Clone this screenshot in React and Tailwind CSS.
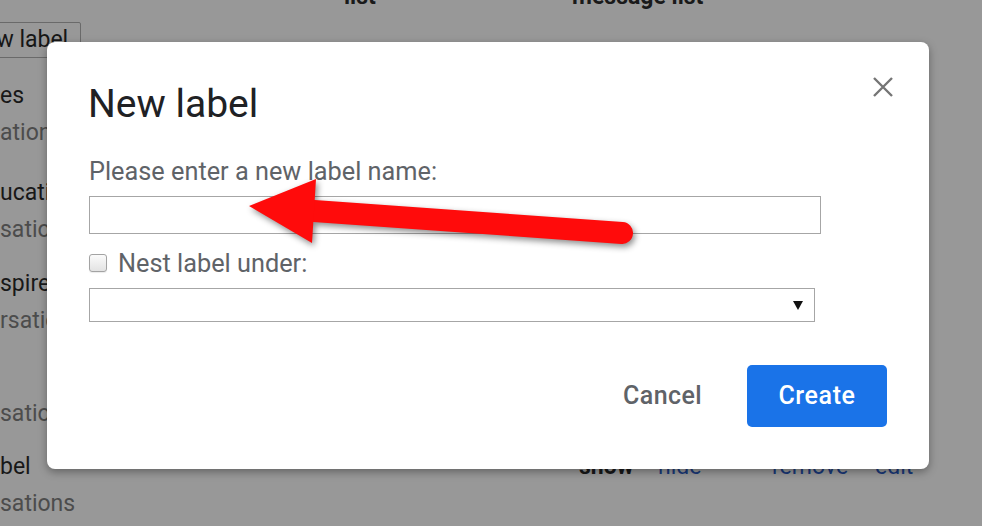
import React from 'react';

const rows = [
    { name: 'es', count: 'ations', gap: 'mt-[19px]' },
    { name: 'ucation', count: 'sations', gap: 'mt-[23px]' },
    { name: 'spire', count: 'rsations', gap: 'mt-[17px]' },
    { name: '', count: 'sations', gap: 'mt-[19px]' },
    { name: 'bel', count: 'sations', gap: 'mt-[16px]', actions: true },
];

const NewLabelDialog = () => (
    <div className="absolute left-[47px] top-[42px] w-[882px] h-[427px] bg-white rounded-[8px] shadow-[0_3px_9px_rgba(0,0,0,0.35)] pl-[42px] pr-[42px] pt-[43px] pb-[42px] flex flex-col">
        {/* Close */}
        <button className="absolute right-[36px] top-[35px] w-[20px] h-[20px]">
            <svg width="20" height="20" viewBox="0 0 20 20">
                <path d="M1 1 L19 19 M19 1 L1 19" stroke="#757575" strokeWidth="2.4" fill="none" />
            </svg>
        </button>

        <h2 className="text-[39px] leading-[38px] h-[38px] text-[#202124] -ml-[1px]">New label</h2>

        <p className="mt-[36px] text-[25.3px] leading-[25px] h-[25px] text-[#5f6368]">Please enter a new label name:</p>
        <input type="text" className="mt-[12px] w-[732px] h-[38px] border border-[#a6a6a6] outline-none" />

        <label className="mt-[17px] h-[25px] flex items-center gap-[11px] text-[25.3px] leading-[25px] text-[#5f6368]">
            <span className="w-[18px] h-[18px] -mt-[2px] rounded-[3px] border border-[#a3a3a3] bg-gradient-to-b from-[#fbfbfb] to-[#e3e3e3] shadow-[0_1px_1px_rgba(0,0,0,0.08)]"></span>
            Nest label under:
        </label>
        <div className="mt-[12px] w-[726px] h-[34px] border border-[#a6a6a6] flex items-center justify-end pr-[11px]">
            <svg width="10" height="9" viewBox="0 0 10 9">
                <polygon points="0,0 10,0 5,9" fill="#111" />
            </svg>
        </div>

        <div className="mt-[43px] flex justify-end items-center gap-[25px]">
            <button className="h-[62px] px-[20px] text-[25px] font-medium tracking-[0.4px] text-[#5f6368]">Cancel</button>
            <button className="w-[140px] h-[62px] rounded-[5px] bg-[#1a73e8] text-white text-[25px] font-medium tracking-[0.6px]">Create</button>
        </div>
    </div>
);

const App = () => {
    return (
        <div className="relative w-[982px] h-[526px] overflow-hidden bg-[#989898] font-[family-name:Roboto,sans-serif] text-[23px]">
            {/* Settings page, dimmed behind the dialog */}
            <div className="flex h-[23px] -mt-[15px] leading-none font-bold text-[#1a1a1a]">
                <span className="ml-[344px] w-[228px]">list</span>
                <span>message list</span>
            </div>

            <div className="mt-[14px] -ml-[45px] w-[126px] h-[36px] border border-[#6a6a6a] rounded-[2px] flex items-center justify-center text-[#161616]">
                New label
            </div>

            {rows.map((row, i) => (
                <div key={i} className={`${row.gap} leading-[37px]`}>
                    <div className="grid grid-cols-[579px_79px_114px_103px_auto] h-[37px]">
                        <span className="text-[#181818]">{row.name}</span>
                        {row.actions && (
                            <>
                                <span className="font-bold text-[#181818]">show</span>
                                <span className="text-[#19397a]">hide</span>
                                <span className="text-[#19397a]">remove</span>
                                <span className="text-[#19397a]">edit</span>
                            </>
                        )}
                    </div>
                    <div className="h-[37px] text-[#4c4c4c]">{row.count}</div>
                </div>
            ))}

            <NewLabelDialog />

            {/* Red annotation arrow */}
            <svg className="absolute left-0 top-0 pointer-events-none" width="982" height="526" viewBox="0 0 982 526" style={{ filter: 'drop-shadow(2px 3px 3px rgba(0,0,0,0.45))' }}>
                <line x1="300" y1="210" x2="622" y2="233" stroke="#ff0b0b" strokeWidth="22" strokeLinecap="round" />
                <polygon points="249,206 316,179 312,243" fill="#ff0b0b" />
            </svg>
        </div>
    );
};

export default App;
